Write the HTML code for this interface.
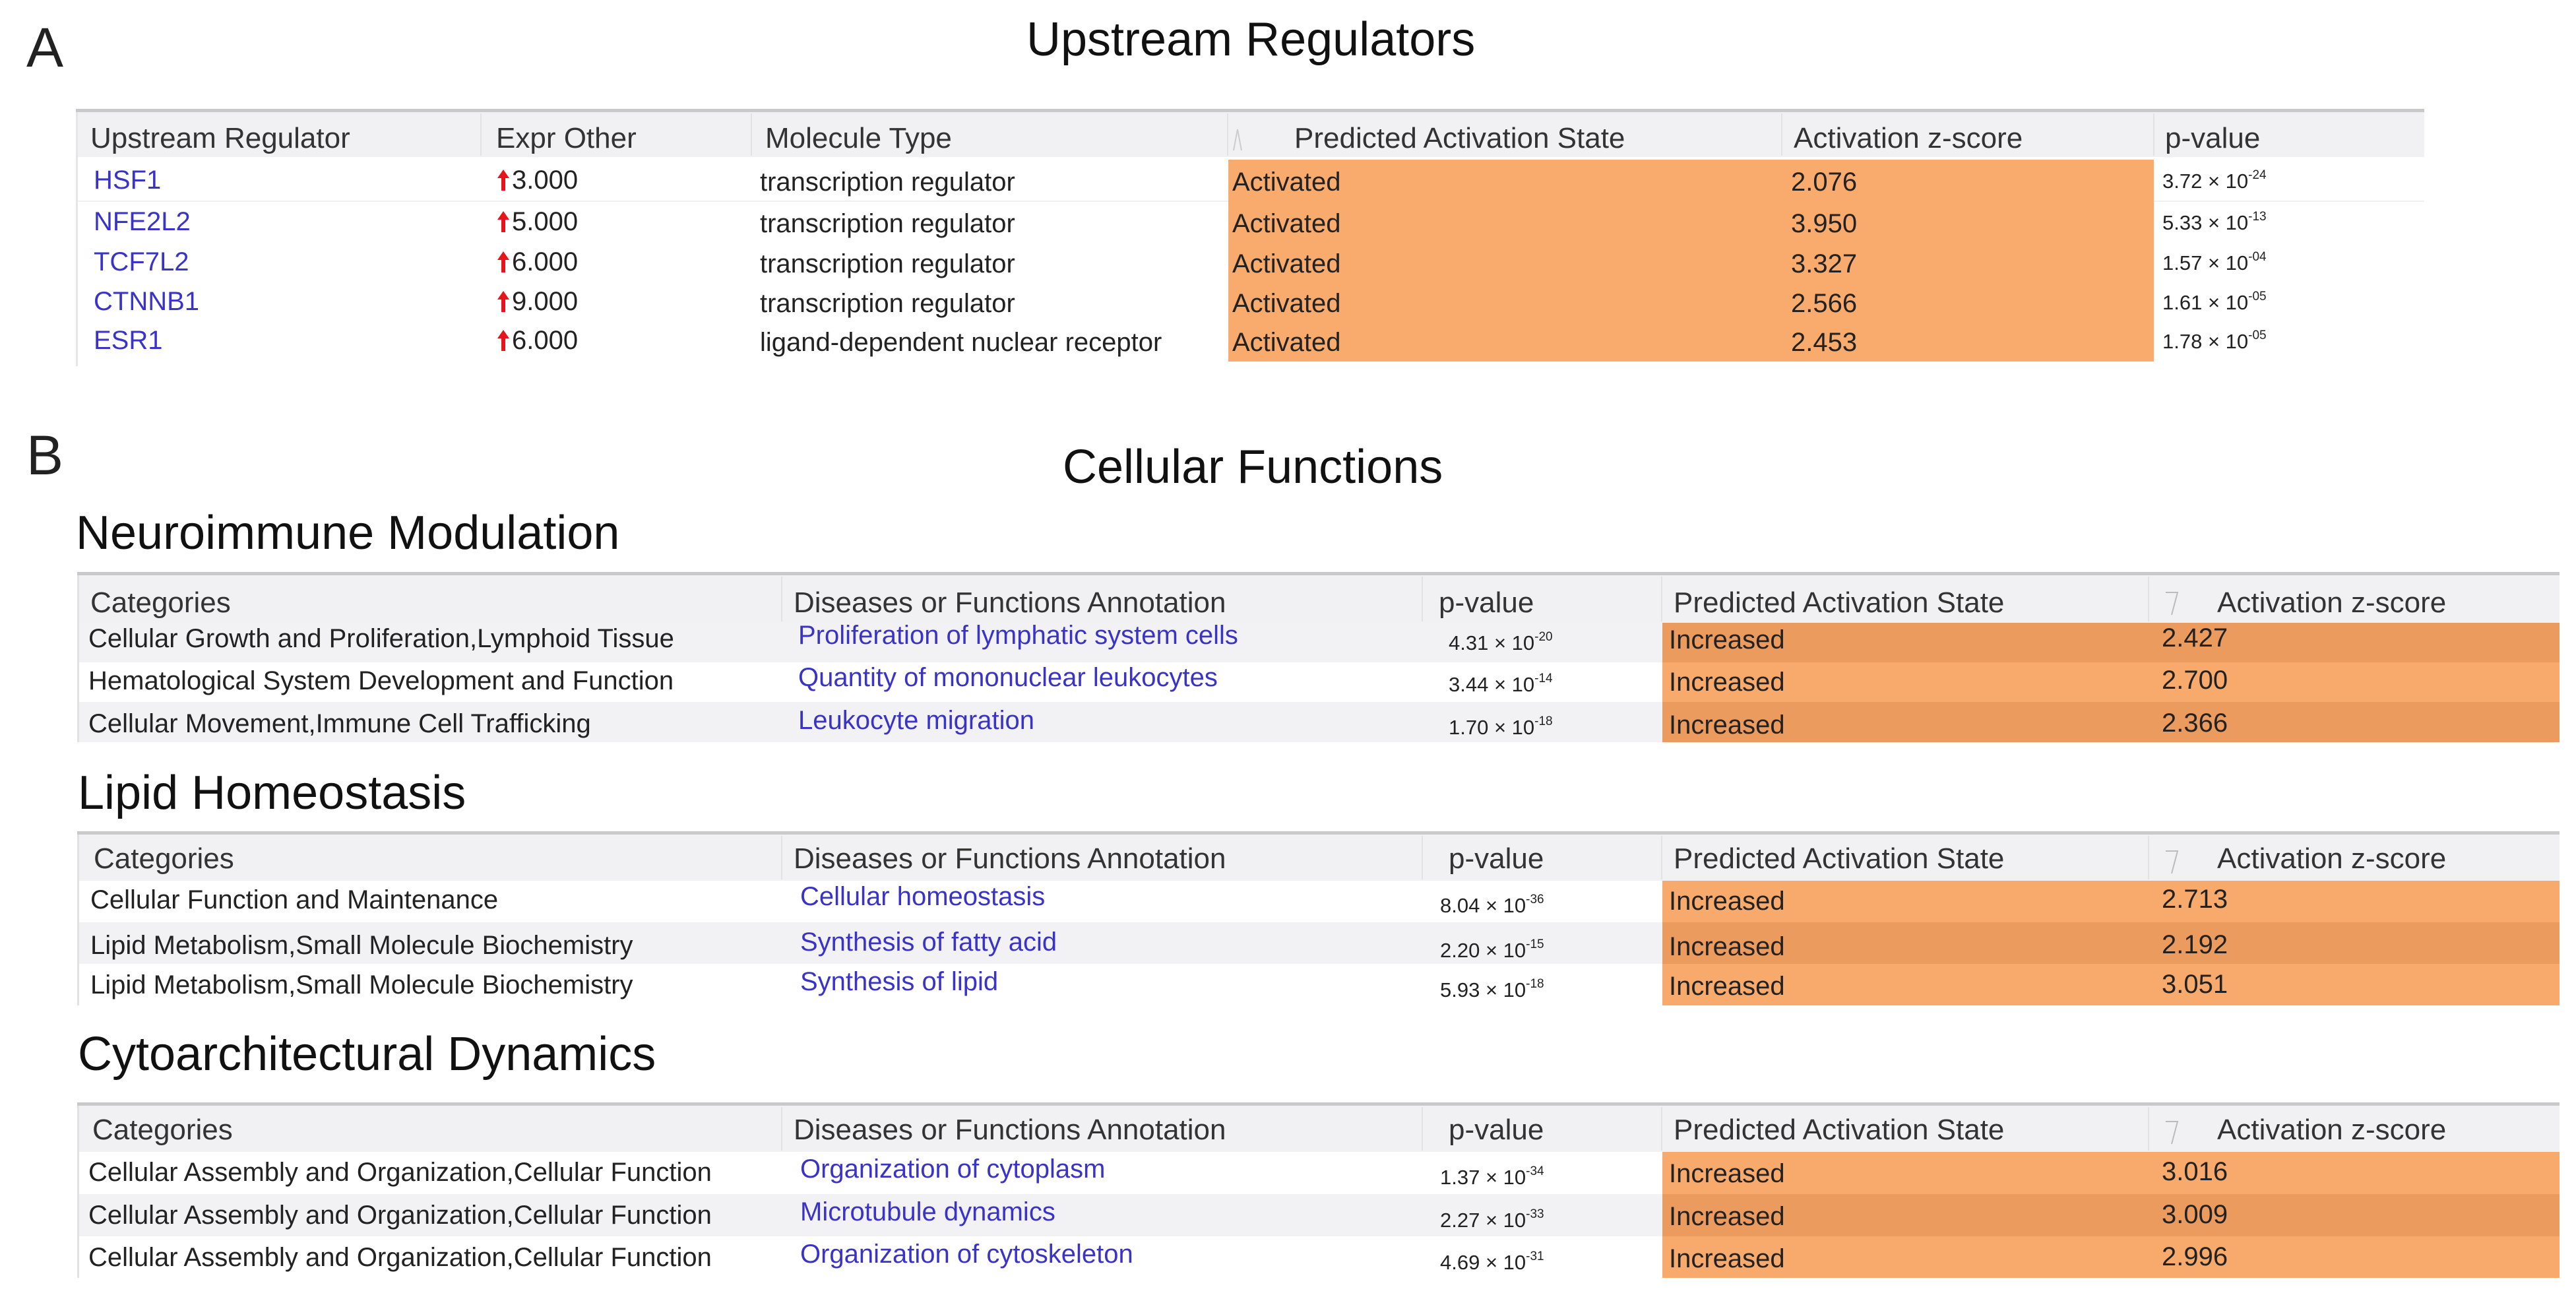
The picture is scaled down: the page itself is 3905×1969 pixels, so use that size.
<!DOCTYPE html>
<html><head><meta charset="utf-8"><style>
*{margin:0;padding:0;box-sizing:border-box}
body{width:3905px;height:1969px;background:#fff;position:relative;overflow:hidden;font-family:"Liberation Sans",Arial,sans-serif;color:#222}
.a{position:absolute;white-space:nowrap}
.t{font-size:40px;line-height:40px;transform:translateY(-4px)}
.h{font-size:44px;line-height:44px;color:#333}
.ti{font-size:72px;line-height:72px;color:#111}
.lk{color:#3a33c8}
.pv{font-size:31px;line-height:31px;color:#222}
.pv sup{font-size:19px;vertical-align:14px}
.bg{position:absolute}
.ar{display:inline-block;width:22px;height:34px;vertical-align:-4px;margin-right:2px}
</style></head><body>

<div class="a" style="left:40px;top:30px;font-size:84px;line-height:84px">A</div>
<div class="a ti" style="left:1556px;top:24px">Upstream Regulators</div>

<!-- Table A -->
<div class="bg" style="left:115px;top:165px;width:3560px;height:5px;background:#c9c9cb"></div>
<div class="bg" style="left:115px;top:170px;width:3560px;height:68px;background:#f1f1f3"></div>
<div class="bg" style="left:115px;top:170px;width:3px;height:385px;background:#e6e6e8"></div>
<div class="bg" style="left:728px;top:172px;width:2px;height:64px;background:#e2e2e4"></div>
<div class="bg" style="left:1138px;top:172px;width:2px;height:64px;background:#e2e2e4"></div>
<div class="bg" style="left:1860px;top:172px;width:2px;height:64px;background:#e2e2e4"></div>
<div class="bg" style="left:2700px;top:172px;width:2px;height:64px;background:#e2e2e4"></div>
<div class="bg" style="left:3264px;top:172px;width:2px;height:64px;background:#e2e2e4"></div>
<div class="bg" style="left:118px;top:304px;width:3557px;height:2px;background:#f0f0f2"></div>
<div class="bg" style="left:1862px;top:242px;width:1403px;height:306px;background:#f9ab6d"></div>
<svg class="a" style="left:1866px;top:190px" width="20" height="40"><path d="M4 38 L10 6 L16 38" fill="none" stroke="#ccc" stroke-width="2"/></svg>

<div class="a h" style="left:137px;top:188px">Upstream Regulator</div>
<div class="a h" style="left:752px;top:188px">Expr Other</div>
<div class="a h" style="left:1160px;top:188px">Molecule Type</div>
<div class="a h" style="left:1962px;top:188px">Predicted Activation State</div>
<div class="a h" style="left:2719px;top:188px">Activation z-score</div>
<div class="a h" style="left:3282px;top:188px">p-value</div>

<div class="a t lk" style="left:142px;top:257px">HSF1</div>
<div class="a t" style="left:752px;top:257px"><svg class="ar" viewBox="0 0 22 34"><path d="M11 1 L20 14 L14 14 L14 33 L8 33 L8 14 L2 14 Z" fill="#e8141b"/></svg>3.000</div>
<div class="a t" style="left:1152px;top:260px">transcription regulator</div>
<div class="a t" style="left:1868px;top:260px">Activated</div>
<div class="a t" style="left:2715px;top:260px">2.076</div>
<div class="a pv" style="left:3278px;top:250px">3.72 × 10<sup>-24</sup></div>

<div class="a t lk" style="left:142px;top:320px">NFE2L2</div>
<div class="a t" style="left:752px;top:320px"><svg class="ar" viewBox="0 0 22 34"><path d="M11 1 L20 14 L14 14 L14 33 L8 33 L8 14 L2 14 Z" fill="#e8141b"/></svg>5.000</div>
<div class="a t" style="left:1152px;top:323px">transcription regulator</div>
<div class="a t" style="left:1868px;top:323px">Activated</div>
<div class="a t" style="left:2715px;top:323px">3.950</div>
<div class="a pv" style="left:3278px;top:313px">5.33 × 10<sup>-13</sup></div>

<div class="a t lk" style="left:142px;top:381px">TCF7L2</div>
<div class="a t" style="left:752px;top:381px"><svg class="ar" viewBox="0 0 22 34"><path d="M11 1 L20 14 L14 14 L14 33 L8 33 L8 14 L2 14 Z" fill="#e8141b"/></svg>6.000</div>
<div class="a t" style="left:1152px;top:384px">transcription regulator</div>
<div class="a t" style="left:1868px;top:384px">Activated</div>
<div class="a t" style="left:2715px;top:384px">3.327</div>
<div class="a pv" style="left:3278px;top:374px">1.57 × 10<sup>-04</sup></div>

<div class="a t lk" style="left:142px;top:441px">CTNNB1</div>
<div class="a t" style="left:752px;top:441px"><svg class="ar" viewBox="0 0 22 34"><path d="M11 1 L20 14 L14 14 L14 33 L8 33 L8 14 L2 14 Z" fill="#e8141b"/></svg>9.000</div>
<div class="a t" style="left:1152px;top:444px">transcription regulator</div>
<div class="a t" style="left:1868px;top:444px">Activated</div>
<div class="a t" style="left:2715px;top:444px">2.566</div>
<div class="a pv" style="left:3278px;top:434px">1.61 × 10<sup>-05</sup></div>

<div class="a t lk" style="left:142px;top:500px">ESR1</div>
<div class="a t" style="left:752px;top:500px"><svg class="ar" viewBox="0 0 22 34"><path d="M11 1 L20 14 L14 14 L14 33 L8 33 L8 14 L2 14 Z" fill="#e8141b"/></svg>6.000</div>
<div class="a t" style="left:1152px;top:503px">ligand-dependent nuclear receptor</div>
<div class="a t" style="left:1868px;top:503px">Activated</div>
<div class="a t" style="left:2715px;top:503px">2.453</div>
<div class="a pv" style="left:3278px;top:493px">1.78 × 10<sup>-05</sup></div>

<div class="a" style="left:40px;top:648px;font-size:84px;line-height:84px">B</div>
<div class="a ti" style="left:1611px;top:672px">Cellular Functions</div>

<!-- Table B1 -->
<div class="a ti" style="left:115px;top:772px">Neuroimmune Modulation</div>
<div class="bg" style="left:117px;top:867px;width:3763px;height:5px;background:#c9c9cb"></div>
<div class="bg" style="left:117px;top:872px;width:3763px;height:72px;background:#f1f1f3"></div>
<div class="bg" style="left:117px;top:944px;width:3763px;height:60px;background:#f2f2f4"></div>
<div class="bg" style="left:117px;top:1064px;width:3763px;height:61px;background:#f2f2f4"></div>
<div class="bg" style="left:117px;top:872px;width:3px;height:253px;background:#e2e2e4"></div>
<div class="bg" style="left:1184px;top:874px;width:2px;height:68px;background:#e2e2e4"></div>
<div class="bg" style="left:2155px;top:874px;width:2px;height:68px;background:#e2e2e4"></div>
<div class="bg" style="left:2518px;top:874px;width:2px;height:68px;background:#e2e2e4"></div>
<div class="bg" style="left:3256px;top:874px;width:2px;height:68px;background:#e2e2e4"></div>
<div class="bg" style="left:2520px;top:944px;width:1360px;height:60px;background:#ec9b5f"></div>
<div class="bg" style="left:2520px;top:1004px;width:1360px;height:60px;background:#f7aa6c"></div>
<div class="bg" style="left:2520px;top:1064px;width:1360px;height:61px;background:#ec9b5f"></div>
<svg class="a" style="left:3280px;top:892px" width="24" height="44"><path d="M3 6 L21 6 L12 40" fill="none" stroke="#bbb" stroke-width="2"/></svg>
<div class="a h" style="left:137px;top:892px">Categories</div>
<div class="a h" style="left:1203px;top:892px">Diseases or Functions Annotation</div>
<div class="a h" style="left:2181px;top:892px">p-value</div>
<div class="a h" style="left:2537px;top:892px">Predicted Activation State</div>
<div class="a h" style="left:3361px;top:892px">Activation z-score</div>

<div class="a t" style="left:134px;top:952px">Cellular Growth and Proliferation,Lymphoid Tissue</div>
<div class="a t lk" style="left:1210px;top:947px">Proliferation of lymphatic system cells</div>
<div class="a pv" style="left:2196px;top:950px">4.31 × 10<sup>-20</sup></div>
<div class="a t" style="left:2530px;top:954px">Increased</div>
<div class="a t" style="left:3277px;top:951px">2.427</div>

<div class="a t" style="left:134px;top:1016px">Hematological System Development and Function</div>
<div class="a t lk" style="left:1210px;top:1011px">Quantity of mononuclear leukocytes</div>
<div class="a pv" style="left:2196px;top:1013px">3.44 × 10<sup>-14</sup></div>
<div class="a t" style="left:2530px;top:1018px">Increased</div>
<div class="a t" style="left:3277px;top:1015px">2.700</div>

<div class="a t" style="left:134px;top:1081px">Cellular Movement,Immune Cell Trafficking</div>
<div class="a t lk" style="left:1210px;top:1076px">Leukocyte migration</div>
<div class="a pv" style="left:2196px;top:1078px">1.70 × 10<sup>-18</sup></div>
<div class="a t" style="left:2530px;top:1083px">Increased</div>
<div class="a t" style="left:3277px;top:1080px">2.366</div>

<!-- Table B2 -->
<div class="a ti" style="left:118px;top:1166px">Lipid Homeostasis</div>
<div class="bg" style="left:117px;top:1260px;width:3763px;height:5px;background:#c9c9cb"></div>
<div class="bg" style="left:117px;top:1265px;width:3763px;height:70px;background:#f1f1f3"></div>
<div class="bg" style="left:117px;top:1398px;width:3763px;height:63px;background:#f2f2f4"></div>
<div class="bg" style="left:117px;top:1265px;width:3px;height:259px;background:#e2e2e4"></div>
<div class="bg" style="left:1184px;top:1267px;width:2px;height:66px;background:#e2e2e4"></div>
<div class="bg" style="left:2155px;top:1267px;width:2px;height:66px;background:#e2e2e4"></div>
<div class="bg" style="left:2518px;top:1267px;width:2px;height:66px;background:#e2e2e4"></div>
<div class="bg" style="left:3256px;top:1267px;width:2px;height:66px;background:#e2e2e4"></div>
<div class="bg" style="left:2520px;top:1335px;width:1360px;height:63px;background:#f7aa6c"></div>
<div class="bg" style="left:2520px;top:1398px;width:1360px;height:63px;background:#ec9b5f"></div>
<div class="bg" style="left:2520px;top:1461px;width:1360px;height:63px;background:#f7aa6c"></div>
<svg class="a" style="left:3280px;top:1284px" width="24" height="44"><path d="M3 6 L21 6 L12 40" fill="none" stroke="#bbb" stroke-width="2"/></svg>
<div class="a h" style="left:142px;top:1280px">Categories</div>
<div class="a h" style="left:1203px;top:1280px">Diseases or Functions Annotation</div>
<div class="a h" style="left:2196px;top:1280px">p-value</div>
<div class="a h" style="left:2537px;top:1280px">Predicted Activation State</div>
<div class="a h" style="left:3361px;top:1280px">Activation z-score</div>

<div class="a t" style="left:137px;top:1348px">Cellular Function and Maintenance</div>
<div class="a t lk" style="left:1213px;top:1343px">Cellular homeostasis</div>
<div class="a pv" style="left:2183px;top:1348px">8.04 × 10<sup>-36</sup></div>
<div class="a t" style="left:2530px;top:1350px">Increased</div>
<div class="a t" style="left:3277px;top:1347px">2.713</div>

<div class="a t" style="left:137px;top:1417px">Lipid Metabolism,Small Molecule Biochemistry</div>
<div class="a t lk" style="left:1213px;top:1412px">Synthesis of fatty acid</div>
<div class="a pv" style="left:2183px;top:1416px">2.20 × 10<sup>-15</sup></div>
<div class="a t" style="left:2530px;top:1419px">Increased</div>
<div class="a t" style="left:3277px;top:1416px">2.192</div>

<div class="a t" style="left:137px;top:1477px">Lipid Metabolism,Small Molecule Biochemistry</div>
<div class="a t lk" style="left:1213px;top:1472px">Synthesis of lipid</div>
<div class="a pv" style="left:2183px;top:1476px">5.93 × 10<sup>-18</sup></div>
<div class="a t" style="left:2530px;top:1479px">Increased</div>
<div class="a t" style="left:3277px;top:1476px">3.051</div>

<!-- Table B3 -->
<div class="a ti" style="left:118px;top:1562px">Cytoarchitectural Dynamics</div>
<div class="bg" style="left:117px;top:1671px;width:3763px;height:5px;background:#c9c9cb"></div>
<div class="bg" style="left:117px;top:1676px;width:3763px;height:70px;background:#f1f1f3"></div>
<div class="bg" style="left:117px;top:1810px;width:3763px;height:64px;background:#f2f2f4"></div>
<div class="bg" style="left:117px;top:1676px;width:3px;height:261px;background:#e2e2e4"></div>
<div class="bg" style="left:1184px;top:1678px;width:2px;height:66px;background:#e2e2e4"></div>
<div class="bg" style="left:2155px;top:1678px;width:2px;height:66px;background:#e2e2e4"></div>
<div class="bg" style="left:2518px;top:1678px;width:2px;height:66px;background:#e2e2e4"></div>
<div class="bg" style="left:3256px;top:1678px;width:2px;height:66px;background:#e2e2e4"></div>
<div class="bg" style="left:2520px;top:1746px;width:1360px;height:64px;background:#f7aa6c"></div>
<div class="bg" style="left:2520px;top:1810px;width:1360px;height:64px;background:#ec9b5f"></div>
<div class="bg" style="left:2520px;top:1874px;width:1360px;height:63px;background:#f7aa6c"></div>
<svg class="a" style="left:3280px;top:1694px" width="24" height="44"><path d="M3 6 L21 6 L12 40" fill="none" stroke="#bbb" stroke-width="2"/></svg>
<div class="a h" style="left:140px;top:1691px">Categories</div>
<div class="a h" style="left:1203px;top:1691px">Diseases or Functions Annotation</div>
<div class="a h" style="left:2196px;top:1691px">p-value</div>
<div class="a h" style="left:2537px;top:1691px">Predicted Activation State</div>
<div class="a h" style="left:3361px;top:1691px">Activation z-score</div>

<div class="a t" style="left:134px;top:1761px">Cellular Assembly and Organization,Cellular Function</div>
<div class="a t lk" style="left:1213px;top:1756px">Organization of cytoplasm</div>
<div class="a pv" style="left:2183px;top:1760px">1.37 × 10<sup>-34</sup></div>
<div class="a t" style="left:2530px;top:1763px">Increased</div>
<div class="a t" style="left:3277px;top:1760px">3.016</div>

<div class="a t" style="left:134px;top:1826px">Cellular Assembly and Organization,Cellular Function</div>
<div class="a t lk" style="left:1213px;top:1821px">Microtubule dynamics</div>
<div class="a pv" style="left:2183px;top:1825px">2.27 × 10<sup>-33</sup></div>
<div class="a t" style="left:2530px;top:1828px">Increased</div>
<div class="a t" style="left:3277px;top:1825px">3.009</div>

<div class="a t" style="left:134px;top:1890px">Cellular Assembly and Organization,Cellular Function</div>
<div class="a t lk" style="left:1213px;top:1885px">Organization of cytoskeleton</div>
<div class="a pv" style="left:2183px;top:1889px">4.69 × 10<sup>-31</sup></div>
<div class="a t" style="left:2530px;top:1892px">Increased</div>
<div class="a t" style="left:3277px;top:1889px">2.996</div>

</body></html>
